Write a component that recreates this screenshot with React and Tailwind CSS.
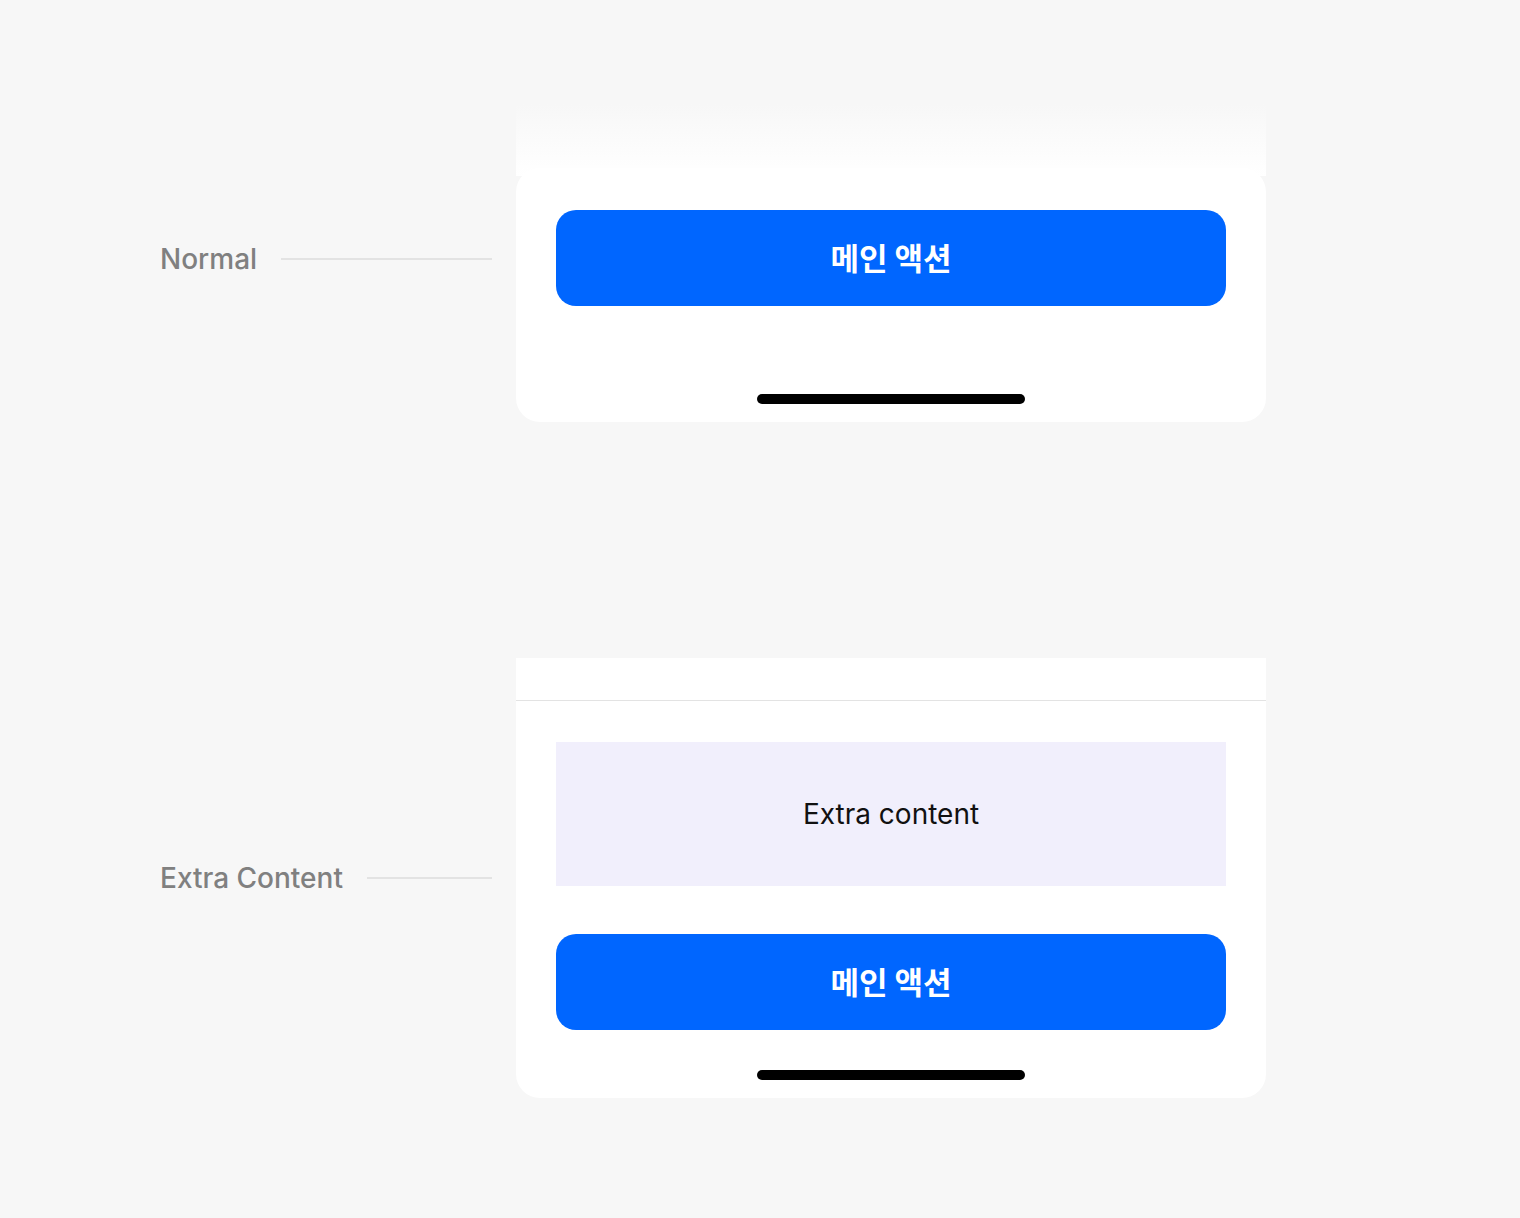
import React from 'react'

const KR = "font-['Inter','Noto_Sans_CJK_KR',sans-serif]"

function Label({ text, className = '' }) {
  return (
    <div className={`flex w-[332px] shrink-0 items-center gap-6 ${className}`}>
      <span className={`${KR} text-[28px] font-medium leading-none text-[#808080]`}>{text}</span>
      <div className="h-[2px] flex-1 bg-[#e3e3e3]" />
    </div>
  )
}

function MainButton() {
  return (
    <button className="flex h-24 w-full items-center justify-center rounded-[20px] bg-[#0066ff]">
      <span className="pb-[3px] font-['Noto_Sans_CJK_KR',sans-serif] text-[31px] font-bold leading-none text-white">
        메인 액션
      </span>
    </button>
  )
}

function HomeIndicator() {
  return <div className="mx-auto h-[10px] w-[268px] rounded-full bg-black" />
}

export default function App() {
  return (
    <div className={`${KR} min-h-[1218px] w-full bg-[#f7f7f7] pt-[104px]`}>
      {/* Normal */}
      <div className="flex items-center gap-6 pl-[160px]">
        <Label text="Normal" className="pb-2" />
        <div className="w-[750px]">
          <div className="h-[72px] bg-gradient-to-b from-[#f7f7f7] to-[#ffffff]" />
          <div className="-mt-2 rounded-[24px] bg-white px-10 pt-[42px] pb-[18px]">
            <MainButton />
            <div className="mt-[88px]">
              <HomeIndicator />
            </div>
          </div>
        </div>
      </div>

      {/* Extra Content */}
      <div className="mt-[236px] flex items-center gap-6 pl-[160px]">
        <Label text="Extra Content" />
        <div className="w-[750px] rounded-b-[24px] bg-white">
          <div className="h-[42px]" />
          <div className="h-px bg-[#e3e3e3]" />
          <div className="px-10 pt-[41px] pb-[18px]">
            <div className="flex h-[144px] items-center justify-center bg-[#f1effc]">
              <span className="text-[28px] leading-none text-[#111111]">Extra content</span>
            </div>
            <div className="mt-12">
              <MainButton />
            </div>
            <div className="mt-10">
              <HomeIndicator />
            </div>
          </div>
        </div>
      </div>
    </div>
  )
}
